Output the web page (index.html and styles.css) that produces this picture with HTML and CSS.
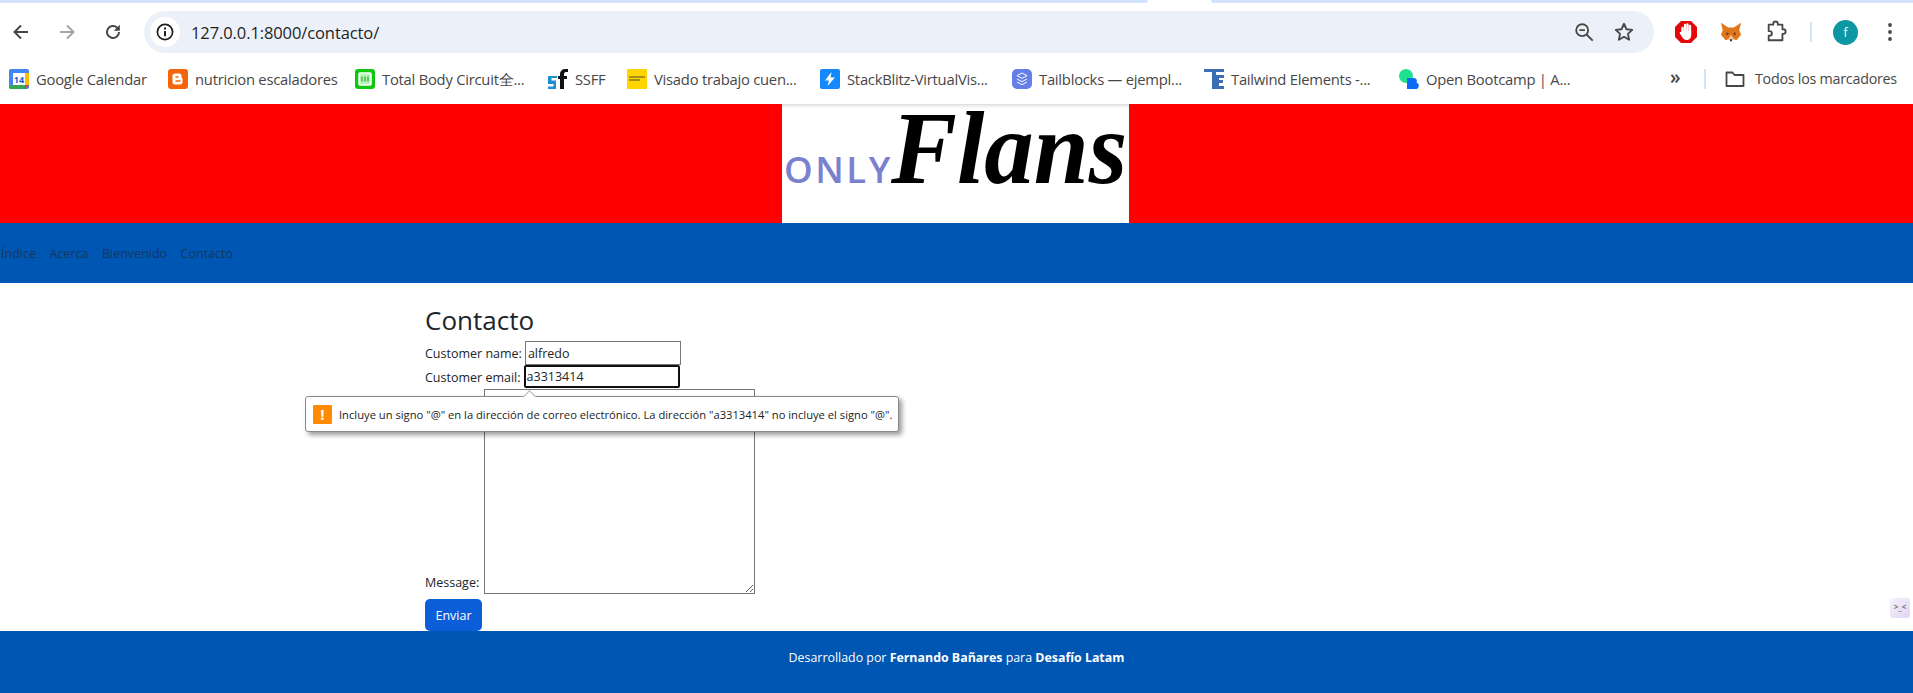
FILE: index.html
```html
<!DOCTYPE html>
<html lang="es">
  <head>
    <meta charset="UTF-8" />
    <title>Contacto</title>
    <link rel="stylesheet" href="styles.css">
  </head>
  <body>
    <div class="tabstrip">
      <span class="tab-edge tab-edge-left"></span>
      <span class="tab-edge tab-edge-right"></span>
    </div>

    <div class="toolbar">
      <div class="nav-buttons">
        <svg class="tool-icon" viewBox="0 0 20 20"><path d="M17 10H4M10 3.500 3.500 10l6.500 6.500" fill="none" stroke="#474747" stroke-width="2"/></svg>
        <svg class="tool-icon" viewBox="0 0 20 20"><path d="M3 10h13M10 3.500l6.500 6.500-6.500 6.500" fill="none" stroke="#a3a5a8" stroke-width="2"/></svg>
        <svg class="tool-icon" viewBox="0 0 20 20"><path d="M16 10a6 6 0 1 1-1.800-4.300L16 7.500" fill="none" stroke="#474747" stroke-width="2"/><path d="M16.800 2.800v6h-6z" fill="#474747"/></svg>
      </div>
      <div class="omnibox">
        <span class="site-info">
          <svg width="20" height="20" viewBox="0 0 20 20"><circle cx="10" cy="10" r="7.600" fill="none" stroke="#1f1f1f" stroke-width="1.700"/><path d="M10 9v5.200M10 5.600v1.800" stroke="#1f1f1f" stroke-width="2"/></svg>
        </span>
        <span class="url">127.0.0.1:8000/contacto/</span>
        <svg class="omni-icon" viewBox="0 0 24 24"><circle cx="10" cy="10" r="6.500" fill="none" stroke="#474747" stroke-width="2"/><path d="M7 10h6M15 15l6.500 6.500" stroke="#474747" stroke-width="2"/></svg>
        <svg class="omni-icon" viewBox="0 0 24 24"><path d="m12 3 2.700 6 6.300.7-4.700 4.300 1.300 6.500L12 17.200 6.400 20.500l1.300-6.500L3 9.700 9.300 9z" fill="none" stroke="#474747" stroke-width="2" stroke-linejoin="round"/></svg>
      </div>
      <div class="extensions">
        <svg class="ext-icon" viewBox="0 0 22 24"><path d="M6 1h10l6 6v10l-6 6H6l-6-6V7z" fill="#e40808"/><path d="M7.500 8v6M10 5v7M12.500 4.500V12M15 6v8" stroke="#fff" stroke-width="2.300" stroke-linecap="round"/><path d="M6.400 11h9.800v4c0 3-2 5-4.500 5-2.200 0-3.500-1-4.500-3l-2.400-3.600c-.6-1 .8-1.800 1.600-.9z" fill="#fff"/></svg>
        <svg class="ext-icon" viewBox="0 0 24 24"><path d="M1 2l8 5h6l8-5-2 8 2 5-5 6-3-1h-6l-3 1-5-6 2-5z" fill="#e2761b"/><path d="M7 12l3 2-3 2zM17 12l-3 2 3 2z" fill="#763d16"/><path d="M9 20l3-5 3 5-3 2z" fill="#f5c9a0"/><path d="M11 20h2v2h-2z" fill="#222"/></svg>
        <svg class="ext-icon" viewBox="0 0 24 24"><path d="M4 4h5V3a2.500 2.500 0 0 1 5 0v1h5v5h1a2.500 2.500 0 0 1 0 5h-1v7H4v-5h1a2.500 2.500 0 0 0 0-5H4z" fill="none" stroke="#474747" stroke-width="2" stroke-linejoin="round"/></svg>
        <span class="toolbar-sep"></span>
        <span class="avatar">f</span>
        <svg class="menu-dots" viewBox="0 0 6 20"><circle cx="3" cy="3" r="1.900" fill="#474747"/><circle cx="3" cy="10" r="1.900" fill="#474747"/><circle cx="3" cy="17" r="1.900" fill="#474747"/></svg>
      </div>
    </div>

    <div class="bookmarks">
      <div class="bookmark-list">
        <a class="bookmark">
          <svg class="favicon" viewBox="0 0 20 20"><rect width="20" height="20" rx="2" fill="#4285f4"/><rect x="4" y="4" width="12" height="12" fill="#fff"/><path d="M0 16h16v4H2a2 2 0 0 1-2-2z" fill="#34a853"/><path d="M16 16h4l-4 4z" fill="#ea4335"/><path d="M16 4h4v12h-4z" fill="#fbbc04"/><text x="10" y="14" class="favicon-text">14</text></svg>
          Google Calendar
        </a>
        <a class="bookmark">
          <svg class="favicon" viewBox="0 0 20 20"><rect width="20" height="20" rx="3" fill="#f4650c"/><path d="M7 4.500h4a2.500 2.500 0 0 1 2.500 2.500v1.500l1 1V13a2.500 2.500 0 0 1-2.500 2.500H7A2.500 2.500 0 0 1 4.500 13V7A2.500 2.500 0 0 1 7 4.500z" fill="#fff"/><path d="M7.500 8h3M7.500 12h5" stroke="#f4650c" stroke-width="1.400"/></svg>
          nutricion escaladores
        </a>
        <a class="bookmark">
          <svg class="favicon" viewBox="0 0 20 20"><rect width="20" height="20" rx="3" fill="#0fc70f"/><rect x="4" y="4" width="12" height="12" rx="1" fill="#b8f5b8" stroke="#fff" stroke-width="1.500"/><path d="M7 7.500v5M10 7.500v5M13 7.500v5" stroke="#0a9a0a"/></svg>
          Total Body Circuit全...
        </a>
        <a class="bookmark">
          <svg class="favicon" viewBox="0 0 20 20"><path d="M9 9H3.500v2.500H8V20H0v-2.500h5.500V15H0V7h9z" fill="#1f8fcf"/><path d="M12 5a5 5 0 0 1 5-5h3v3h-2a2 2 0 0 0-2 2v2h3v3h-3v10h-4V10h-2V7h2z" fill="#111"/></svg>
          SSFF
        </a>
        <a class="bookmark">
          <svg class="favicon" viewBox="0 0 20 20"><rect width="20" height="20" fill="#ffd500"/><path d="M2 8h16M2 11h11" stroke="#8a7a20" stroke-width="1.600"/></svg>
          Visado trabajo cuen...
        </a>
        <a class="bookmark">
          <svg class="favicon" viewBox="0 0 20 20"><rect width="20" height="20" rx="2" fill="#1389fd"/><path d="M11.500 3 5 11.500h4L7.500 17 15 8.500h-4.300z" fill="#fff"/></svg>
          StackBlitz-VirtualVis...
        </a>
        <a class="bookmark">
          <svg class="favicon" viewBox="0 0 20 20"><rect width="20" height="20" rx="5" fill="#667eea"/><path d="M10 4l5 2.700-5 2.700-5-2.700zM5 10l5 2.700 5-2.700M5 13l5 2.700 5-2.700" fill="none" stroke="#fff"/></svg>
          Tailblocks — ejempl...
        </a>
        <a class="bookmark">
          <svg class="favicon" viewBox="0 0 20 20"><path d="M0 0h20v3H12v17H8V3H0z" fill="#3b6fb5"/><path d="M12 6h8v3h-5v2h4v3h-4v3h5v3h-8z" fill="#3b6fb5"/></svg>
          Tailwind Elements -...
        </a>
        <a class="bookmark">
          <svg class="favicon" viewBox="0 0 20 20"><circle cx="7" cy="7" r="7" fill="#1fe08f"/><path d="M8 9h7a3 3 0 0 1 2.500 4.500A3.200 3.200 0 0 1 15 20H8z" fill="#0a6cf5"/></svg>
          Open Bootcamp | A...
        </a>
      </div>
      <span class="more-bookmarks">»</span>
      <span class="bookmarks-sep"></span>
      <svg class="folder-icon" viewBox="0 0 20 20"><path d="M1.500 3.500h6l2 2.500h9v11h-17z" fill="none" stroke="#474747" stroke-width="1.800" stroke-linejoin="round"/></svg>
      <span class="all-bookmarks">Todos los marcadores</span>
    </div>

    <div class="page">
      <header class="site-header">
        <div class="logo">
          <span class="logo-only">ONLY</span>
          <span class="logo-flans">Flans</span>
        </div>
      </header>

      <nav class="site-nav">
        <a href="#">Índice</a>
        <a href="#">Acerca</a>
        <a href="#">Bienvenido</a>
        <a href="#">Contacto</a>
      </nav>

      <main class="content">
        <h2 class="page-title">Contacto</h2>
        <form class="contact-form">
          <div class="form-row">
            <label for="name">Customer name:</label>
            <input class="field field-name" type="text" id="name" value="alfredo" />
          </div>
          <div class="form-row">
            <label for="email">Customer email:</label>
            <input class="field field-email" type="text" id="email" value="a3313414" />
          </div>
          <div class="form-row">
            <label for="message">Message:</label>
            <textarea class="field field-message" id="message"></textarea>
          </div>
          <button class="send-btn" type="button">Enviar</button>

          <div class="validation-bubble">
            <span class="bubble-arrow"></span>
            <span class="bubble-icon">!</span>
            <span>Incluye un signo "@" en la dirección de correo electrónico. La dirección "a3313414" no incluye el signo "@".</span>
          </div>
        </form>
      </main>

      <footer class="site-footer">
        <p>Desarrollado por <strong>Fernando Bañares</strong> para <strong>Desafío Latam</strong></p>
      </footer>

      <div class="corner-widget"><span>&gt;_&lt;</span></div>
    </div>
  </body>
</html>
```

FILE: styles.css
```css
* {
  box-sizing: border-box;
}
html,
body {
  margin: 0;
  height: 693px;
  overflow: hidden;
}
body {
  background-color: white;
  font-family: "Open Sans", "Noto Sans", sans-serif;
  display: flex;
  flex-direction: column;
}

/* browser chrome */
.tabstrip {
  height: 3px;
  flex: none;
  display: flex;
  justify-content: space-between;
}
.tab-edge {
  background-color: #d3e3fd;
}
.tab-edge-left {
  width: 1148px;
  border-radius: 0 0 8px 0;
}
.tab-edge-right {
  width: 702px;
  border-radius: 0 0 0 8px;
}
.toolbar {
  height: 50px;
  flex: none;
  padding-top: 8px;
  display: flex;
  align-items: flex-start;
}
.nav-buttons {
  width: 144px;
  height: 42px;
  padding-left: 11px;
  display: flex;
  align-items: center;
  gap: 26px;
}
.tool-icon {
  width: 20px;
  height: 20px;
}
.omnibox {
  width: 1510px;
  height: 42px;
  background-color: #ecf1f9;
  border-radius: 21px;
  padding: 0 19px 0 6px;
  display: flex;
  align-items: center;
}
.site-info {
  width: 30px;
  height: 30px;
  background-color: white;
  border-radius: 50%;
  display: flex;
  align-items: center;
  justify-content: center;
}
.url {
  margin-left: 11px;
  flex: 1;
  font-size: 16.500px;
  letter-spacing: -0.1px;
  color: #1f1f1f;
}
.omni-icon {
  width: 22px;
  height: 22px;
  margin-left: 18px;
}
.extensions {
  height: 42px;
  flex: 1;
  padding-left: 21px;
  display: flex;
  align-items: center;
}
.ext-icon {
  width: 22px;
  height: 24px;
  margin-right: 23px;
}
.toolbar-sep {
  width: 2px;
  height: 20px;
  background-color: #d3e3fd;
}
.avatar {
  width: 25px;
  height: 25px;
  margin-left: 21px;
  border-radius: 50%;
  background-color: #0d97a3;
  color: white;
  font-size: 12px;
  display: flex;
  align-items: center;
  justify-content: center;
}
.menu-dots {
  width: 6px;
  height: 20px;
  margin-left: 29px;
}

.bookmarks {
  height: 51px;
  flex: none;
  padding-top: 16px;
  display: flex;
  align-items: flex-start;
  font-size: 14.800px;
  color: #474747;
}
.bookmark-list {
  width: 1670px;
  padding-left: 9px;
  display: grid;
  grid-template-columns: 159px 187px 193px 79px 193px 192px 192px 195px 1fr;
}
.bookmark {
  height: 20px;
  display: flex;
  align-items: center;
  gap: 7px;
  white-space: nowrap;
  letter-spacing: -0.25px;
}
.favicon {
  width: 20px;
  height: 20px;
  flex: none;
}
.favicon-text {
  font-size: 9px;
  font-weight: 700;
  fill: #1a5fc8;
  text-anchor: middle;
  letter-spacing: 0;
}
.more-bookmarks {
  width: 34px;
  height: 20px;
  font-size: 19px;
  font-weight: 600;
  line-height: 17px;
  text-align: left;
}
.bookmarks-sep {
  width: 2px;
  height: 20px;
  background-color: #d3e3fd;
}
.folder-icon {
  width: 20px;
  height: 20px;
  margin-left: 19px;
}
.all-bookmarks {
  margin-left: 10px;
  font-size: 14.300px;
  line-height: 20px;
  white-space: nowrap;
  letter-spacing: -0.25px;
}

/* the page */
.page {
  flex: 1;
  min-height: 0;
  display: flex;
  flex-direction: column;
  position: relative;
}
.site-header {
  height: 119px;
  flex: none;
  background-color: red;
  display: flex;
  justify-content: center;
}
.logo {
  width: 347px;
  margin-left: -2px;
  padding-left: 2px;
  background-color: white;
  display: flex;
  align-items: baseline;
  white-space: nowrap;
  box-shadow: inset 0 4px 4px -3px rgba(0, 0, 0, 0.2);
}
.logo-only {
  font-size: 36.500px;
  line-height: 60px;
  font-weight: 600;
  letter-spacing: 2.500px;
  color: #7b80cf;
}
.logo-flans {
  margin-left: -2px;
  margin-right: -12px;
  font-family: "Liberation Serif", serif;
  font-size: 104px;
  line-height: 87px;
  font-style: italic;
  font-weight: 700;
  color: black;
  transform: scaleX(0.95);
  transform-origin: left;
}
.site-nav {
  height: 60px;
  flex: none;
  background-color: #0056b3;
  padding-left: 1px;
  display: flex;
  align-items: center;
  gap: 13.500px;
  font-size: 12.500px;
}
.site-nav a {
  color: rgba(33, 37, 41, 0.65);
  text-decoration: none;
}
.content {
  flex: 1;
  min-height: 0;
  padding: 20px 0 0 425px;
  color: #212529;
}
.page-title {
  margin: 0;
  height: 38px;
  font-size: 26px;
  line-height: 35px;
  font-weight: 500;
}
.contact-form {
  position: relative;
  display: flex;
  flex-direction: column;
  align-items: flex-start;
  font-size: 12.500px;
}
.form-row {
  display: flex;
  align-items: flex-end;
  gap: 3px;
}
.form-row label {
  line-height: 20px;
  color: #212529;
  padding-bottom: 1px;
}
.field {
  border: 1px solid #767676;
  border-radius: 0;
  padding: 1px 2px;
  margin: 0;
  font-family: inherit;
  font-size: 12.500px;
  color: #212529;
  outline: none;
}
.field-name {
  width: 156px;
  height: 24px;
}
.field-email {
  width: 156px;
  height: 23px;
  margin-bottom: 1px;
  border: 2px solid #101010;
  border-radius: 2px;
  padding: 0 1px;
}
.field-message {
  display: block;
  width: 271px;
  height: 205px;
  margin-left: 2px;
}
.send-btn {
  margin-top: 5px;
  width: 57px;
  height: 32px;
  border: none;
  border-radius: 5px;
  background-color: #0b5ed7;
  color: white;
  font-family: inherit;
  font-size: 12.500px;
  padding: 0;
}
.validation-bubble {
  position: absolute;
  left: -120px;
  top: 55px;
  width: 594px;
  height: 36px;
  background-color: white;
  border: 1px solid #8a8a8a;
  border-radius: 3px;
  box-shadow: 3px 3px 5px rgba(0, 0, 0, 0.4);
  padding-left: 7px;
  display: flex;
  align-items: center;
  gap: 7px;
  font-size: 11.200px;
  color: #222;
  white-space: nowrap;
}
.bubble-arrow {
  position: absolute;
  left: 219px;
  top: -5px;
  width: 9px;
  height: 9px;
  background-color: white;
  border-left: 1px solid #b0b0b0;
  border-top: 1px solid #b0b0b0;
  transform: rotate(45deg);
}
.bubble-icon {
  width: 19px;
  height: 19px;
  flex: none;
  background-color: #ff8c00;
  border-radius: 1px;
  color: white;
  font-size: 15px;
  font-weight: 700;
  line-height: 18px;
  text-align: center;
}
.site-footer {
  height: 62px;
  flex: none;
  background-color: #0056b3;
  color: white;
  font-size: 12.400px;
  display: flex;
  justify-content: center;
  padding: 17px 0 0 0;
}
.site-footer p {
  margin: 0;
  line-height: 20px;
}
.corner-widget {
  position: absolute;
  right: 3px;
  top: 494px;
  width: 20px;
  height: 20px;
  border-radius: 3px;
  background: linear-gradient(135deg, #f4f2fa, #e3d4f6);
  color: #777;
  font-size: 8px;
  font-weight: 700;
  text-align: center;
  line-height: 18px;
}
```
